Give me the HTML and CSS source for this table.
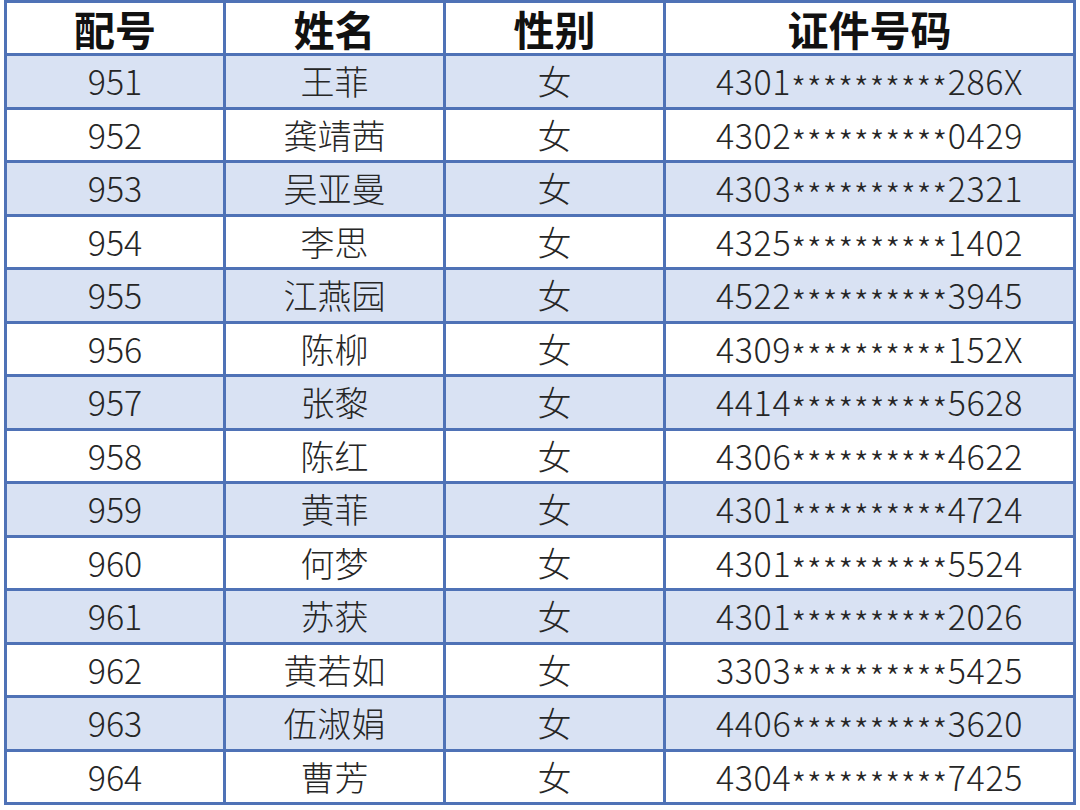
FILE: index.html
```html
<!DOCTYPE html>
<html lang="zh-CN">
<head>
<meta charset="utf-8">
<title>名单</title>
<link rel="stylesheet" href="styles.css">
</head>
<body>
<div class="sheet">
  <div class="cell head">配号</div><div class="cell head">姓名</div><div class="cell head">性别</div><div class="cell head">证件号码</div>
  <div class="cell odd">951</div><div class="cell odd">王菲</div><div class="cell odd">女</div><div class="cell odd id">4301<span class="mask">**********</span>286X</div>
  <div class="cell">952</div><div class="cell">龚靖茜</div><div class="cell">女</div><div class="cell id">4302<span class="mask">**********</span>0429</div>
  <div class="cell odd">953</div><div class="cell odd">吴亚曼</div><div class="cell odd">女</div><div class="cell odd id">4303<span class="mask">**********</span>2321</div>
  <div class="cell">954</div><div class="cell">李思</div><div class="cell">女</div><div class="cell id">4325<span class="mask">**********</span>1402</div>
  <div class="cell odd">955</div><div class="cell odd">江燕园</div><div class="cell odd">女</div><div class="cell odd id">4522<span class="mask">**********</span>3945</div>
  <div class="cell">956</div><div class="cell">陈柳</div><div class="cell">女</div><div class="cell id">4309<span class="mask">**********</span>152X</div>
  <div class="cell odd">957</div><div class="cell odd">张黎</div><div class="cell odd">女</div><div class="cell odd id">4414<span class="mask">**********</span>5628</div>
  <div class="cell">958</div><div class="cell">陈红</div><div class="cell">女</div><div class="cell id">4306<span class="mask">**********</span>4622</div>
  <div class="cell odd">959</div><div class="cell odd">黄菲</div><div class="cell odd">女</div><div class="cell odd id">4301<span class="mask">**********</span>4724</div>
  <div class="cell">960</div><div class="cell">何梦</div><div class="cell">女</div><div class="cell id">4301<span class="mask">**********</span>5524</div>
  <div class="cell odd">961</div><div class="cell odd">苏获</div><div class="cell odd">女</div><div class="cell odd id">4301<span class="mask">**********</span>2026</div>
  <div class="cell">962</div><div class="cell">黄若如</div><div class="cell">女</div><div class="cell id">3303<span class="mask">**********</span>5425</div>
  <div class="cell odd">963</div><div class="cell odd">伍淑娟</div><div class="cell odd">女</div><div class="cell odd id">4406<span class="mask">**********</span>3620</div>
  <div class="cell">964</div><div class="cell">曹芳</div><div class="cell">女</div><div class="cell id">4304<span class="mask">**********</span>7425</div>
</div>
</body>
</html>
```
FILE: styles.css
```css
html, body {
  margin: 0;
  padding: 0;
  background: #ffffff;
}
body {
  width: 1080px;
  height: 810px;
  overflow: hidden;
}
.sheet {
  margin-left: 4px;
  width: 1072px;
  box-sizing: border-box;
  display: grid;
  grid-template-columns: 216px 217px 217px 407px;
  grid-template-rows: 50px repeat(14, 50.5px);
  gap: 3px;
  padding: 3px;
  background: #4f72b6;
  font-family: "Noto Sans CJK SC", "Noto Sans", sans-serif;
}
.cell {
  background: #ffffff;
  color: #262626;
  font-size: 34px;
  font-weight: 300;
  display: flex;
  align-items: center;
  justify-content: center;
  line-height: 44px;
  white-space: nowrap;
}
.cell.odd {
  background: #d9e2f3;
}
.cell.id {
  letter-spacing: 0.6px;
}
.cell.head {
  font-size: 41px;
  font-weight: 700;
  line-height: 48px;
  color: #111111;
}
.mask {
  font-size: 34px;
  letter-spacing: 0.6px;
  position: relative;
  top: 7px;
}
```
